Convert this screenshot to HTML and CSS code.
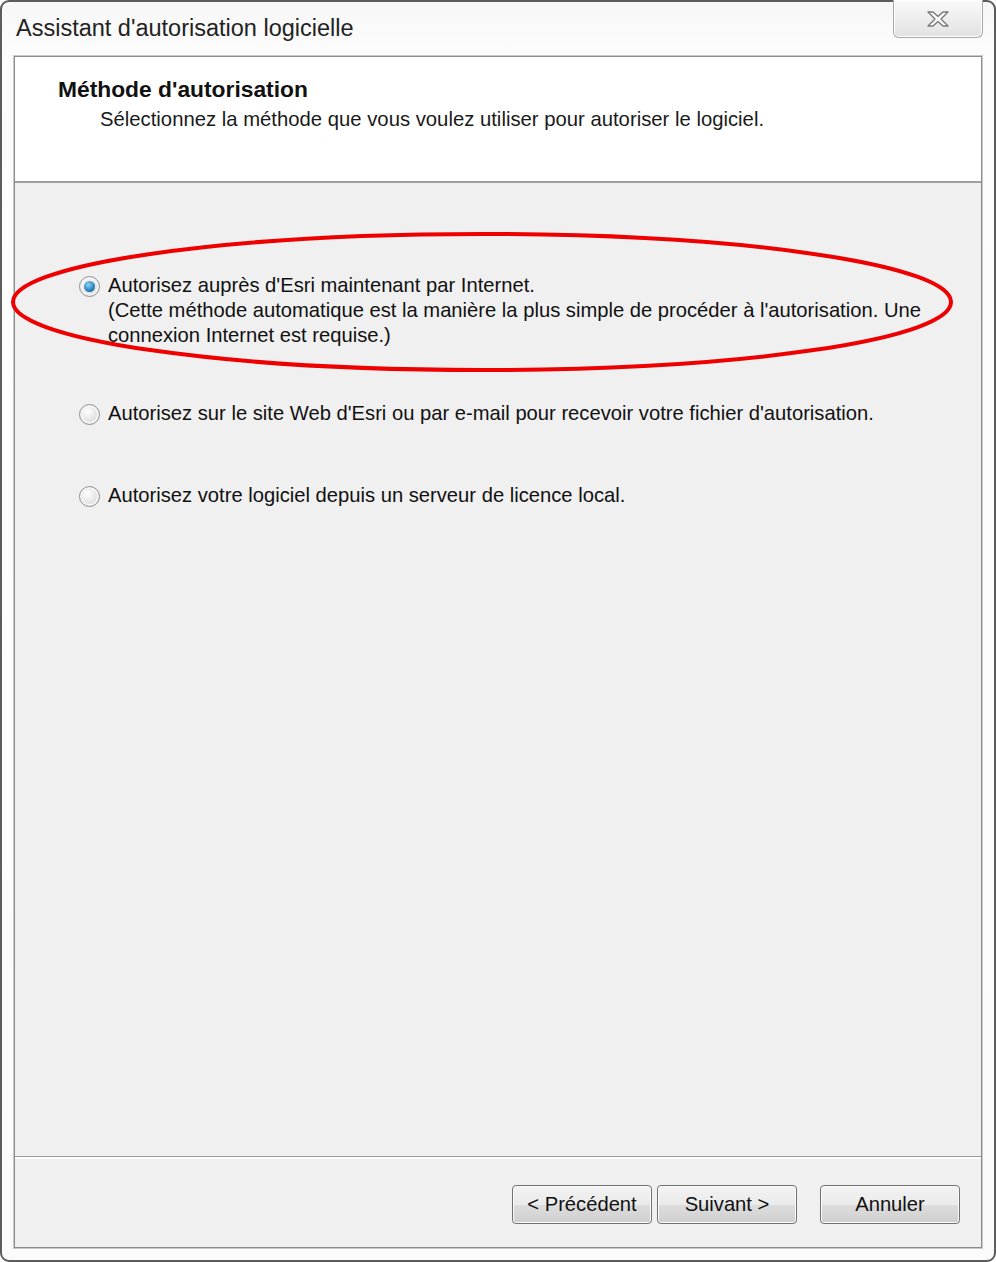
FILE: index.html
```html
<!DOCTYPE html>
<html lang="fr">
<head>
  <meta charset="UTF-8">
  <title>Assistant d'autorisation logicielle</title>
  <link rel="stylesheet" href="styles.css">
</head>
<body>
  <div class="window">
    <div class="titlebar">
      <span class="title">Assistant d'autorisation logicielle</span>
      <button class="close" type="button" aria-label="Fermer">
        <svg width="24" height="18" viewBox="0 0 24 18">
          <path d="M2 2 H7 L12 6.5 L17 2 H22 L15 9 L22 16 H17 L12 11.5 L7 16 H2 L9 9 Z" fill="#fdfdfd" stroke="#7a7a7a" stroke-width="1.4" stroke-linejoin="round"/>
        </svg>
      </button>
    </div>

    <div class="client">
      <div class="header">
        <h1>Méthode d'autorisation</h1>
        <p>Sélectionnez la méthode que vous voulez utiliser pour autoriser le logiciel.</p>
      </div>

      <div class="content">
        <label class="option">
          <input type="radio" name="method" checked>
          <span class="radio"></span>
          <span class="text">Autorisez auprès d'Esri maintenant par Internet.<br>(Cette méthode automatique est la manière la plus simple de procéder à l'autorisation. Une connexion Internet est requise.)</span>
        </label>
        <label class="option">
          <input type="radio" name="method">
          <span class="radio"></span>
          <span class="text">Autorisez sur le site Web d'Esri ou par e-mail pour recevoir votre fichier d'autorisation.</span>
        </label>
        <label class="option last">
          <input type="radio" name="method">
          <span class="radio"></span>
          <span class="text">Autorisez votre logiciel depuis un serveur de licence local.</span>
        </label>

        <!-- annotation drawn over the first option -->
        <svg class="mark" width="950" height="145" viewBox="0 0 950 145">
          <ellipse cx="471" cy="71" rx="469" ry="68" fill="none" stroke="#ee0000" stroke-width="4"/>
        </svg>
      </div>

      <div class="footer">
        <button type="button" class="btn">&lt; Précédent</button>
        <button type="button" class="btn">Suivant &gt;</button>
        <button type="button" class="btn cancel">Annuler</button>
      </div>
    </div>
  </div>
</body>
</html>
```

FILE: styles.css
```css
html, body {
  margin: 0;
  padding: 0;
  background: #ffffff;
}

body {
  font-family: 'Liberation Sans', Arial, sans-serif;
  color: #1a1a1a;
}

.window {
  position: relative;
  width: 996px;
  height: 1262px;
  box-sizing: border-box;
  border: 2px solid #5c5c5c;
  border-radius: 9px;
  background: linear-gradient(#f7f7f7, #fdfdfd 60px, #fbfbfb);
  display: flex;
  flex-direction: column;
}

.titlebar {
  height: 54px;
  display: flex;
  align-items: flex-start;
  padding: 13px 0 0 14px;
  box-sizing: border-box;
}

.title {
  font-size: 23.5px;
  color: #222;
}

.close {
  position: absolute;
  top: -2px;
  right: 11px;
  width: 90px;
  height: 38px;
  border: 1px solid #a9a9a9;
  border-top: none;
  border-radius: 0 0 6px 6px;
  background: linear-gradient(#fafafa, #ececec 55%, #e2e2e2);
  box-shadow: inset 0 0 0 1px #ffffff;
  display: flex;
  align-items: center;
  justify-content: center;
  padding: 0;
}

.client {
  flex: 1;
  margin: 0 12px 12px 12px;
  border: 1px solid #8c8c8c;
  box-shadow: 0 0 0 1px #c9c9c9;
  display: flex;
  flex-direction: column;
  background: #f0f0f0;
}

.header {
  height: 126px;
  box-sizing: border-box;
  background: #ffffff;
  border-bottom: 2px solid #a0a0a0;
  padding: 19px 0 0 43px;
}

.header h1 {
  margin: 0;
  font-size: 22.8px;
  font-weight: bold;
  color: #111;
}

.header p {
  margin: 5px 0 0 42px;
  font-size: 20.3px;
  color: #1a1a1a;
}

.content {
  position: relative;
  flex: 1;
  display: flex;
  flex-direction: column;
  gap: 53px;
  padding: 90px 40px 0 64px;
  border-bottom: 1px solid #9a9a9a;
}

.option {
  display: flex;
  align-items: flex-start;
  gap: 8px;
  font-size: 20.2px;
  line-height: 25px;
  color: #111;
}

.option.last {
  margin-top: 4px;
}

.option input {
  display: none;
}

.radio {
  flex: none;
  width: 19px;
  height: 19px;
  margin-top: 3px;
  border-radius: 50%;
  border: 1px solid #8e8f8f;
  background: radial-gradient(circle at 40% 35%, #ffffff, #dcdcdc 70%, #c4c4c4);
  box-shadow: inset 0 0 0 2px #f4f4f4;
  position: relative;
}

.option input:checked + .radio::after {
  content: "";
  position: absolute;
  left: 4px;
  top: 4px;
  width: 11px;
  height: 11px;
  border-radius: 50%;
  background: radial-gradient(circle at 40% 35%, #8fd3f5, #1f7ab8 65%, #0e4f85);
}

.mark {
  position: absolute;
  left: -4px;
  top: 48px;
}

.footer {
  height: 90px;
  box-sizing: border-box;
  border-top: 2px solid #ffffff;
  display: flex;
  justify-content: flex-end;
  align-items: flex-start;
  gap: 5px;
  padding: 26px 21px 0 0;
}

.btn {
  width: 140px;
  height: 39px;
  border: 1px solid #707070;
  border-radius: 4px;
  background: linear-gradient(#f2f2f2, #ebebeb 50%, #dddddd 51%, #cfcfcf);
  box-shadow: inset 0 0 0 1px #fbfbfb;
  font-family: 'Liberation Sans', Arial, sans-serif;
  font-size: 20.2px;
  color: #111;
  padding: 0;
}

.btn.cancel {
  margin-left: 18px;
}
```
